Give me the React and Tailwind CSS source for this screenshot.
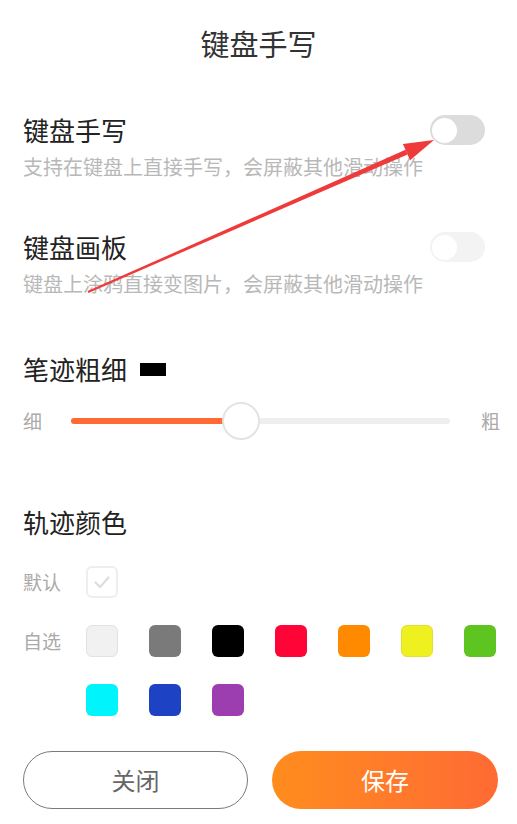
import React from 'react';

const FONT = { fontFamily: '"Noto Sans CJK SC", "Noto Sans", sans-serif' };

const swatches = [
  ['bg-[#f1f1f1]', 'border border-[#e2e2e2]'],
  ['bg-[#7a7a7a]', ''],
  ['bg-[#000000]', ''],
  ['bg-[#ff0537]', ''],
  ['bg-[#ff8a00]', ''],
  ['bg-[#eef020]', 'border border-[#e0e030]'],
  ['bg-[#5ec41f]', ''],
  ['bg-[#00f4fb]', ''],
  ['bg-[#1d42c4]', ''],
  ['bg-[#9c3db0]', ''],
];

const Toggle = ({ dim }) => (
  <div className={`w-[55px] h-[30px] rounded-full flex items-center px-[2px] ${dim ? 'bg-[#f3f3f3]' : 'bg-[#dcdcdc]'}`}>
    <div className="w-[25px] h-[25px] rounded-full bg-white" />
  </div>
);

const SettingRow = ({ title, desc, dim }) => (
  <div className="flex flex-col">
    <div className="flex items-center justify-between h-[40px] pr-[32px]">
      <span className="text-[26px] leading-[40px] text-[#222]">{title}</span>
      <Toggle dim={dim} />
    </div>
    <span className="mt-[3px] text-[20px] leading-[28px] text-[#b8b8b8]">{desc}</span>
  </div>
);

const App = () => {
  const value = 0.45;
  return (
    <div className="relative w-[517px] h-[824px] bg-white overflow-hidden" style={FONT}>
      {/* header */}
      <div className="h-[88px] flex items-center justify-center">
        <span className="text-[29px] text-[#333]">键盘手写</span>
      </div>

      <div className="flex flex-col pl-[23px]">
        <div className="mt-[22px]">
          <SettingRow title="键盘手写" desc="支持在键盘上直接手写，会屏蔽其他滑动操作" />
        </div>
        <div className="mt-[46px]">
          <SettingRow title="键盘画板" desc="键盘上涂鸦直接变图片，会屏蔽其他滑动操作" dim />
        </div>

        {/* stroke width */}
        <div className="mt-[51px] h-[40px] flex items-center">
          <span className="text-[26px] leading-[40px] text-[#222]">笔迹粗细</span>
          <div className="ml-[13px] w-[26px] h-[13px] bg-black" />
        </div>
        <div className="mt-[12px] h-[40px] flex items-center">
          <span className="w-[48px] text-[19px] text-[#aaa]">细</span>
          <div className="relative w-[379px] h-[6px] rounded-full bg-[#eeeeee]">
            <div className="h-full rounded-full bg-[#ff6a35]" style={{ width: `${value * 100}%` }} />
            <div
              className="absolute top-1/2 -translate-y-1/2 -translate-x-1/2 w-[38px] h-[38px] rounded-full bg-white border-2 border-[#e3e3e3]"
              style={{ left: `${((241 - 71) / 379) * 100}%` }}
            />
          </div>
          <span className="ml-[31px] text-[19px] text-[#aaa]">粗</span>
        </div>

        {/* colors */}
        <div className="mt-[61px] h-[40px] flex items-center">
          <span className="text-[26px] leading-[40px] text-[#222]">轨迹颜色</span>
        </div>
        <div className="mt-[24px] h-[32px] flex items-center">
          <span className="w-[63px] text-[19px] text-[#aaa]">默认</span>
          <div className="w-[32px] h-[32px] rounded-[6px] border-2 border-[#eeeeee] flex items-center justify-center">
            <svg width="20" height="20" viewBox="0 0 20 20" fill="none">
              <path d="M3.5 10.5 L8 15 L16.5 5.5" stroke="#dddddd" strokeWidth="2.2" strokeLinecap="round" strokeLinejoin="round" />
            </svg>
          </div>
        </div>
        <div className="mt-[27px] flex">
          <span className="w-[63px] h-[32px] leading-[32px] text-[19px] text-[#aaa]">自选</span>
          <div className="grid grid-cols-7 gap-x-[31px] gap-y-[27px]">
            {swatches.map(([bg, border], i) => (
              <div key={i} className={`w-[32px] h-[32px] rounded-[6px] ${bg} ${border}`} />
            ))}
          </div>
        </div>

        {/* buttons */}
        <div className="mt-[35px] flex gap-[24px]">
          <button className="w-[225px] h-[58px] rounded-full border border-[#7a7a7a] text-[24px] text-[#666] bg-white">
            关闭
          </button>
          <button className="w-[226px] h-[58px] rounded-full bg-gradient-to-r from-[#ff8c1c] to-[#ff6a33] text-[24px] text-white">
            保存
          </button>
        </div>
      </div>

      {/* annotation arrow */}
      <svg className="absolute inset-0 pointer-events-none" width="517" height="824" viewBox="0 0 517 824">
        <polygon points="87.6,291.1 88.4,292.9 407.5,154.4 405.5,149.8" fill="#ef3a3a" />
        <polygon points="434,140 402.9,143.9 410.1,160.3" fill="#ef3a3a" />
      </svg>
    </div>
  );
};

export default App;
